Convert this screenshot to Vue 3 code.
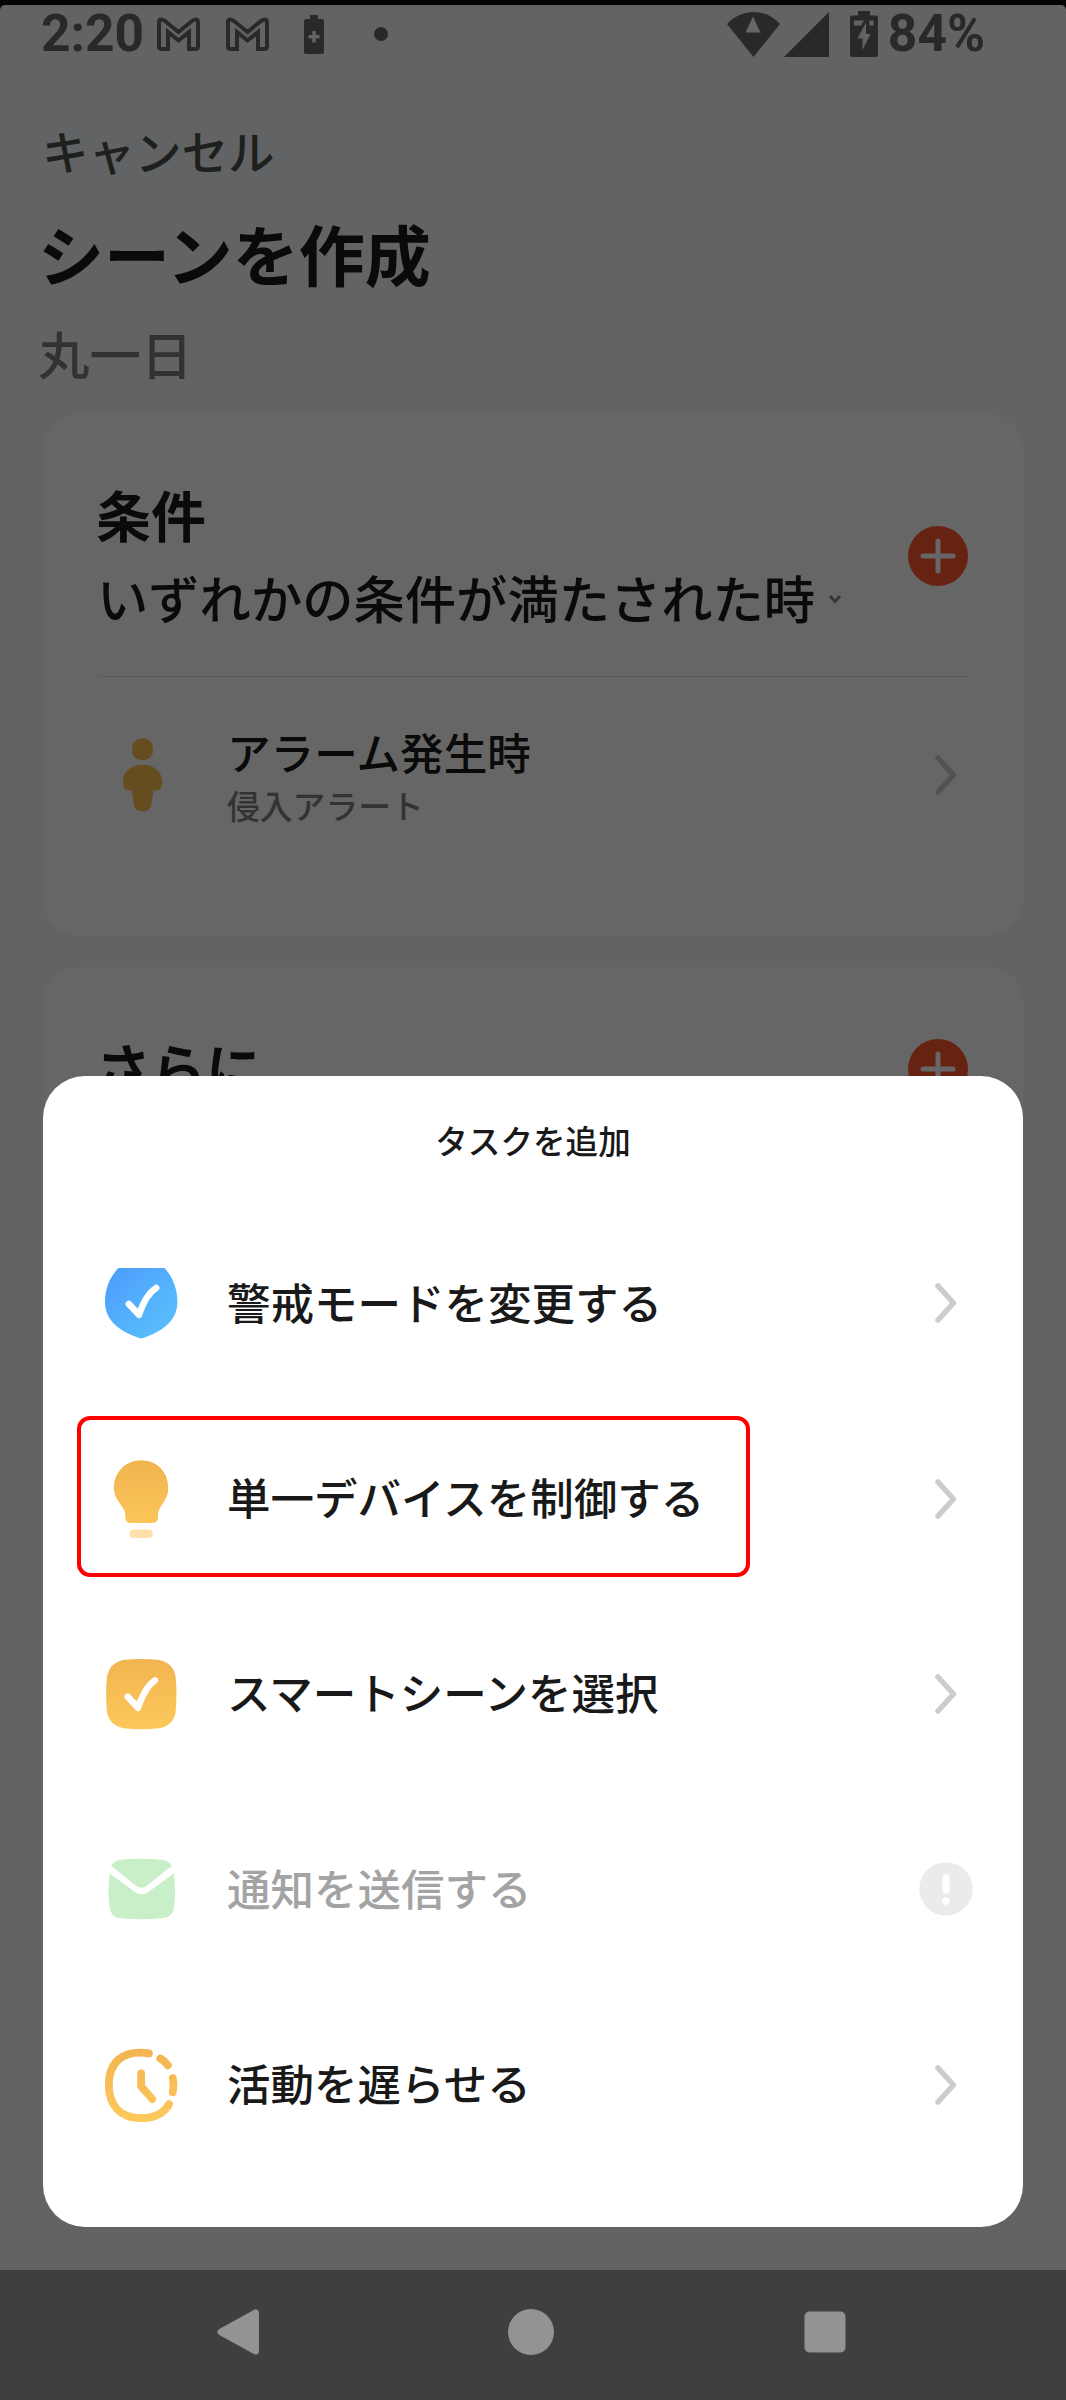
<template>
  <div class="screen">
    <main class="page">
      <header class="status-bar">
        <div class="status-group">
          <span class="status-text">{{ time }}</span>
          <svg v-for="n in 2" :key="n" class="status-mail" viewBox="0 0 43 34">
            <path d="M2 6Q2 0 8 4L21.5 15L35 4Q41 0 41 6V30Q41 32 38 32H32V15L21.5 23.5L11 15V32H5Q2 32 2 30Z" />
          </svg>
          <svg class="status-saver" viewBox="0 0 20 39">
            <path d="M6 0H14V4H18Q20 4 20 6V37Q20 39 18 39H2Q0 39 0 37V6Q0 4 2 4H6Z" />
            <path class="cutout" d="M8.3 16H11.7V20H15.5V23.5H11.7V27.5H8.3V23.5H4.5V20H8.3Z" />
          </svg>
          <span class="status-dot"></span>
        </div>
        <div class="status-group">
          <svg class="status-wifi" viewBox="0 0 53 45">
            <path d="M0 12Q11 0 26.5 0T53 12L26.5 45Z" />
            <path class="wifi-mark" d="M26 4.5L33.5 20.5H18.5Z" />
          </svg>
          <svg class="status-signal" viewBox="0 0 45 45"><path d="M45 0V45H0Z" /></svg>
          <svg class="status-battery" viewBox="0 0 28 46">
            <path d="M8 0H20V4.5H26Q28 4.5 28 6.5V44Q28 46 26 46H2Q0 46 0 44V6.5Q0 4.5 2 4.5H8Z" />
            <path class="cutout" d="M4 9.5H14L11 14.5H4ZM19.5 9.5H23.5V14.5H19.5ZM16 11.5V23H20.5L12.5 39V27.5H7.5Z" />
          </svg>
          <span class="status-text">{{ battery }}</span>
        </div>
      </header>

      <div class="heading">
        <div class="heading__cancel">キャンセル</div>
        <h1 class="heading__title">シーンを作成</h1>
        <div class="heading__period">丸一日</div>
      </div>

      <section class="card">
        <div class="card__head">
          <div>
            <h2 class="card__title">条件</h2>
            <div class="card__mode">
              いずれかの条件が満たされた時
              <svg class="caret" viewBox="0 0 14 10"><path d="M2 2L7 7.5L12 2" /></svg>
            </div>
          </div>
          <svg class="plus" viewBox="0 0 60 60">
            <circle cx="30" cy="30" r="30" />
            <path d="M30 15V45M15 30H45" />
          </svg>
        </div>
        <div class="card__row">
          <svg class="icon" viewBox="0 0 80 80">
            <rect class="person" x="31" y="3.5" width="21" height="21.5" rx="9" />
            <path class="person" d="M41.5 29.8C53 29.8 61 37 61 46V49Q61 55.5 54 55.5H52.3L50.5 69Q49.5 76.5 41.5 76.5T32.7 69L30.7 55.5H29Q22 55.5 22 49V46C22 37 30 29.8 41.5 29.8Z" />
          </svg>
          <div class="card__texts">
            <div class="card__name">アラーム発生時</div>
            <div class="card__detail">侵入アラート</div>
          </div>
          <svg class="chevron" viewBox="0 0 22 40"><path d="M3 3L18.5 20L3 37" /></svg>
        </div>
      </section>

      <section class="card card--more">
        <div class="card__head card__head--short">
          <h2 class="card__title">さらに</h2>
          <svg class="plus" viewBox="0 0 60 60">
            <circle cx="30" cy="30" r="30" />
            <path d="M30 15V45M15 30H45" />
          </svg>
        </div>
      </section>
    </main>

    <div class="scrim">
      <div class="sheet">
        <div class="sheet__title">タスクを追加</div>
        <div
          v-for="task in tasks"
          :key="task.icon"
          class="task"
          :class="{ 'task--disabled': task.disabled }"
        >
          <svg class="icon" viewBox="0 0 80 80">
            <defs>
              <linearGradient id="blue" x1="0" y1="0" x2="1" y2="1">
                <stop offset="0" stop-color="#4c9bfd" />
                <stop offset="1" stop-color="#5bc4fb" />
              </linearGradient>
              <linearGradient id="amber" gradientUnits="userSpaceOnUse" x1="0" y1="4" x2="0" y2="76">
                <stop offset="0" stop-color="#f2b450" />
                <stop offset="1" stop-color="#fdc95b" />
              </linearGradient>
            </defs>
            <template v-if="task.icon === 'shield'">
              <path fill="url(#blue)" d="M17.5 5H63.5C72 14 76.4 27 76.4 39C76.4 57 62 69 40.2 75.4C18 69 4 57 4 39C4 26 8.5 14 17.5 5Z" />
              <path class="check" d="M27.8 41L38 51.8Q45 31 55.2 25" />
            </template>
            <template v-else-if="task.icon === 'bulb'">
              <path fill="url(#amber)" d="M40 1.3C56 1.3 67.3 13 67.3 29C67.3 42 57 47 57 56V58Q57 64 51 64H30Q24.3 64 24.3 58V56C24.3 47 12.9 42 12.9 29C12.9 13 25 1.3 40 1.3Z" />
              <rect x="28.5" y="70.6" width="23.2" height="8.4" rx="4" fill="#fee0ac" />
            </template>
            <template v-else-if="task.icon === 'scene'">
              <path fill="url(#amber)" d="M22 6Q40 3.8 58.5 6Q72 9 74.5 22Q76.4 40 74.5 59Q72 71.5 58.5 74.3Q40 76.4 22 74.3Q9 71.5 6 59Q4.2 40 6 22Q9 9 22 6Z" />
              <path class="check" d="M26.8 42.7L37 53.8Q44 33 54 26.4" />
            </template>
            <template v-else-if="task.icon === 'mail'">
              <path fill="#c9efc9" d="M10 16.8Q13 12 18 11Q40 8.3 63 11Q68 12 70.8 16.8L46 36.8Q40.5 40.5 35 36.8Z" />
              <path fill="#c9efc9" d="M8.8 24.5L34.5 43.4Q40.5 47 46.5 43.4L73 24.5Q75 42 73 59Q71.5 67.5 63 69Q40 71.6 18 69Q10 67.5 8.8 59Q6.2 42 8.8 24.5Z" />
            </template>
            <g v-else class="clock" stroke="url(#amber)">
              <path d="M47.9 8.4C22 4.5 7.8 17 7.8 40C7.8 60 19 73.2 40 73.2C54 73.2 63 68 68 59.2" />
              <path d="M59.3 13.5Q64 16 66.9 20.3" />
              <path d="M71.8 33.2Q73.3 40 71.8 47.2" />
              <path d="M40.2 28.4V41.6L51.2 54" />
            </g>
          </svg>
          <span class="task__label">{{ task.label }}</span>
          <svg v-if="task.disabled" class="notice" viewBox="0 0 54 54">
            <circle cx="27" cy="27" r="26.7" />
            <rect x="23.5" y="12" width="7" height="19.5" rx="3" />
            <circle cx="27" cy="39" r="3.7" />
          </svg>
          <svg v-else class="chevron" viewBox="0 0 22 40"><path d="M3 3L18.5 20L3 37" /></svg>
          <span v-if="task.highlighted" class="task__marker"></span>
        </div>
      </div>
    </div>

    <nav class="nav-bar">
      <svg viewBox="0 0 48 48"><path d="M42.5 5V43L8 24Z" /></svg>
      <svg viewBox="0 0 48 48"><circle cx="24" cy="24" r="23" /></svg>
      <svg viewBox="0 0 48 48"><rect x="3.5" y="3.5" width="41" height="41" rx="5" /></svg>
    </nav>
  </div>
</template>

<script setup>
const time = '2:20';
const battery = '84%';

const tasks = [
  { icon: 'shield', label: '警戒モードを変更する' },
  { icon: 'bulb', label: '単一デバイスを制御する', highlighted: true },
  { icon: 'scene', label: 'スマートシーンを選択' },
  { icon: 'mail', label: '通知を送信する', disabled: true },
  { icon: 'clock', label: '活動を遅らせる' },
];
</script>

<style>
body {
  background: #0a0a0a;
}
</style>

<style scoped>
.screen {
  position: relative;
  display: flex;
  flex-direction: column;
  width: 1066px;
  height: 2400px;
  padding-top: 5px;
  box-sizing: border-box;
  background: #0a0a0a;
  color: #191919;
  font-family: 'Noto Sans CJK JP', sans-serif;
  font-weight: 500;
  white-space: nowrap;
}

.screen svg {
  display: block;
  flex: none;
}

.page {
  flex: 1;
  min-height: 0;
  border-radius: 5px 5px 0 0;
  background: #f4f7fa;
}

/* Status bar */
.status-bar {
  display: flex;
  justify-content: space-between;
  height: 58px;
  padding: 0 81px 0 41px;
  fill: #646a67;
}

.status-group {
  display: flex;
  align-items: center;
}

.status-text {
  color: #646a67;
  font: 700 51.5px/58px Roboto, sans-serif;
}

.status-mail {
  width: 43px;
  height: 34px;
  margin-left: 13px;
  fill: none;
  stroke: #646a67;
  stroke-width: 4;
}

.status-mail + .status-mail {
  margin-left: 26px;
}

.status-saver {
  width: 20px;
  height: 39px;
  margin-left: 35px;
}

.cutout {
  fill: #f4f7fa;
}

.status-dot {
  width: 14px;
  height: 14px;
  margin-left: 50px;
  border-radius: 50%;
  background: #646a67;
}

.status-wifi {
  width: 53px;
  height: 45px;
}

.wifi-mark {
  fill: #fff;
}

.status-signal {
  width: 45px;
  height: 45px;
  margin-left: 4px;
}

.status-battery {
  width: 28px;
  height: 46px;
  margin: 0 10px 0 21px;
}

/* Page heading */
.heading {
  display: flex;
  flex-direction: column;
  height: 351px;
  padding: 57px 40px 0;
  box-sizing: border-box;
}

.heading__cancel {
  padding-left: 2px;
  color: #4b504b;
  font-size: 46.5px;
  line-height: 60px;
}

.heading__title {
  margin: 32px 0 30px -2px;
  font-size: 66px;
  font-weight: 700;
  line-height: 80px;
}

.heading__period {
  margin-left: -2px;
  color: #7d7d7d;
  font-size: 51.5px;
  line-height: 62px;
}

/* Condition cards */
.card {
  height: 521px;
  margin: 0 43px;
  padding: 69px 55px 0;
  box-sizing: border-box;
  border-radius: 34px;
  background: #fff;
}

.card--more {
  margin-top: 32px;
}

.card__head {
  display: flex;
  align-items: center;
  justify-content: space-between;
  height: 146px;
  padding-bottom: 47px;
  border-bottom: 1px solid #e4e4e4;
}

.card__head--short {
  height: 66px;
}

.card__title {
  margin: 0 0 24px -2px;
  font-size: 55px;
  font-weight: 700;
  line-height: 60px;
}

.card__head--short .card__title {
  margin-bottom: 6px;
}

.card__mode {
  display: flex;
  align-items: center;
  margin: 0 0 2px -1px;
  font-size: 51.3px;
  line-height: 60px;
}

.caret {
  width: 14px;
  height: 10px;
  margin: 4px 0 0 13px;
  fill: none;
  stroke: #8a8a8a;
  stroke-width: 3;
}

.plus {
  width: 60px;
  height: 60px;
  fill: #ff592d;
  stroke: #fff;
  stroke-width: 5;
  stroke-linecap: round;
}

.plus circle {
  stroke: none;
}

.card__row {
  display: flex;
  align-items: center;
  height: 195px;
  padding: 0 11px 0 3px;
}

.card__texts {
  flex: 1;
  margin-left: 46px;
}

.card__name {
  margin-bottom: 11px;
  font-size: 43.6px;
  line-height: 50px;
}

.card__detail {
  color: #7f7f7f;
  font-size: 32.8px;
  line-height: 36px;
}

.icon {
  width: 80px;
  height: 80px;
}

.person {
  fill: #ffc050;
}

.chevron {
  width: 22px;
  height: 40px;
  fill: none;
  stroke: #ccc;
  stroke-width: 5.5;
  stroke-linecap: round;
  stroke-linejoin: round;
}

/* Bottom sheet, laid over the dimmed page */
.scrim {
  position: absolute;
  inset: 0 0 130px;
  display: flex;
  flex-direction: column;
  justify-content: flex-end;
  padding: 0 43px 43.5px;
  background: rgba(0, 0, 0, 0.6);
}

.sheet {
  height: 1151px;
  border-radius: 42px;
  background: #fff;
}

.sheet__title {
  height: 130px;
  padding-top: 42px;
  box-sizing: border-box;
  font-size: 32.6px;
  line-height: 44px;
  text-align: center;
}

.task {
  position: relative;
  display: flex;
  align-items: center;
  height: 195.4px;
  padding: 0 66px 0 58px;
}

.task__label {
  flex: 1;
  margin: -3px 0 0 46px;
  font-size: 43.5px;
  line-height: 60px;
}

.task--disabled {
  padding-right: 50px;
}

.task--disabled .task__label {
  color: #a3a3a3;
}

.task__marker {
  position: absolute;
  left: 34px;
  top: 15px;
  width: 673px;
  height: 161px;
  box-sizing: border-box;
  border: 4px solid #f00;
  border-radius: 13px;
}

.check {
  fill: none;
  stroke: #fff;
  stroke-width: 6.5;
  stroke-linecap: round;
  stroke-linejoin: round;
}

.clock {
  fill: none;
  stroke-width: 7.8;
  stroke-linecap: round;
}

.notice {
  width: 54px;
  height: 54px;
  fill: #fff;
}

.notice circle:first-child {
  fill: #ebebeb;
}

/* System navigation */
.nav-bar {
  display: flex;
  align-items: center;
  justify-content: space-between;
  height: 130px;
  padding: 0 217px 6px 213px;
  box-sizing: border-box;
  background: #3f3f3f;
  fill: #939393;
}

.nav-bar svg {
  width: 48px;
  height: 48px;
}

.nav-bar path {
  stroke: #939393;
  stroke-width: 7;
  stroke-linejoin: round;
}
</style>
